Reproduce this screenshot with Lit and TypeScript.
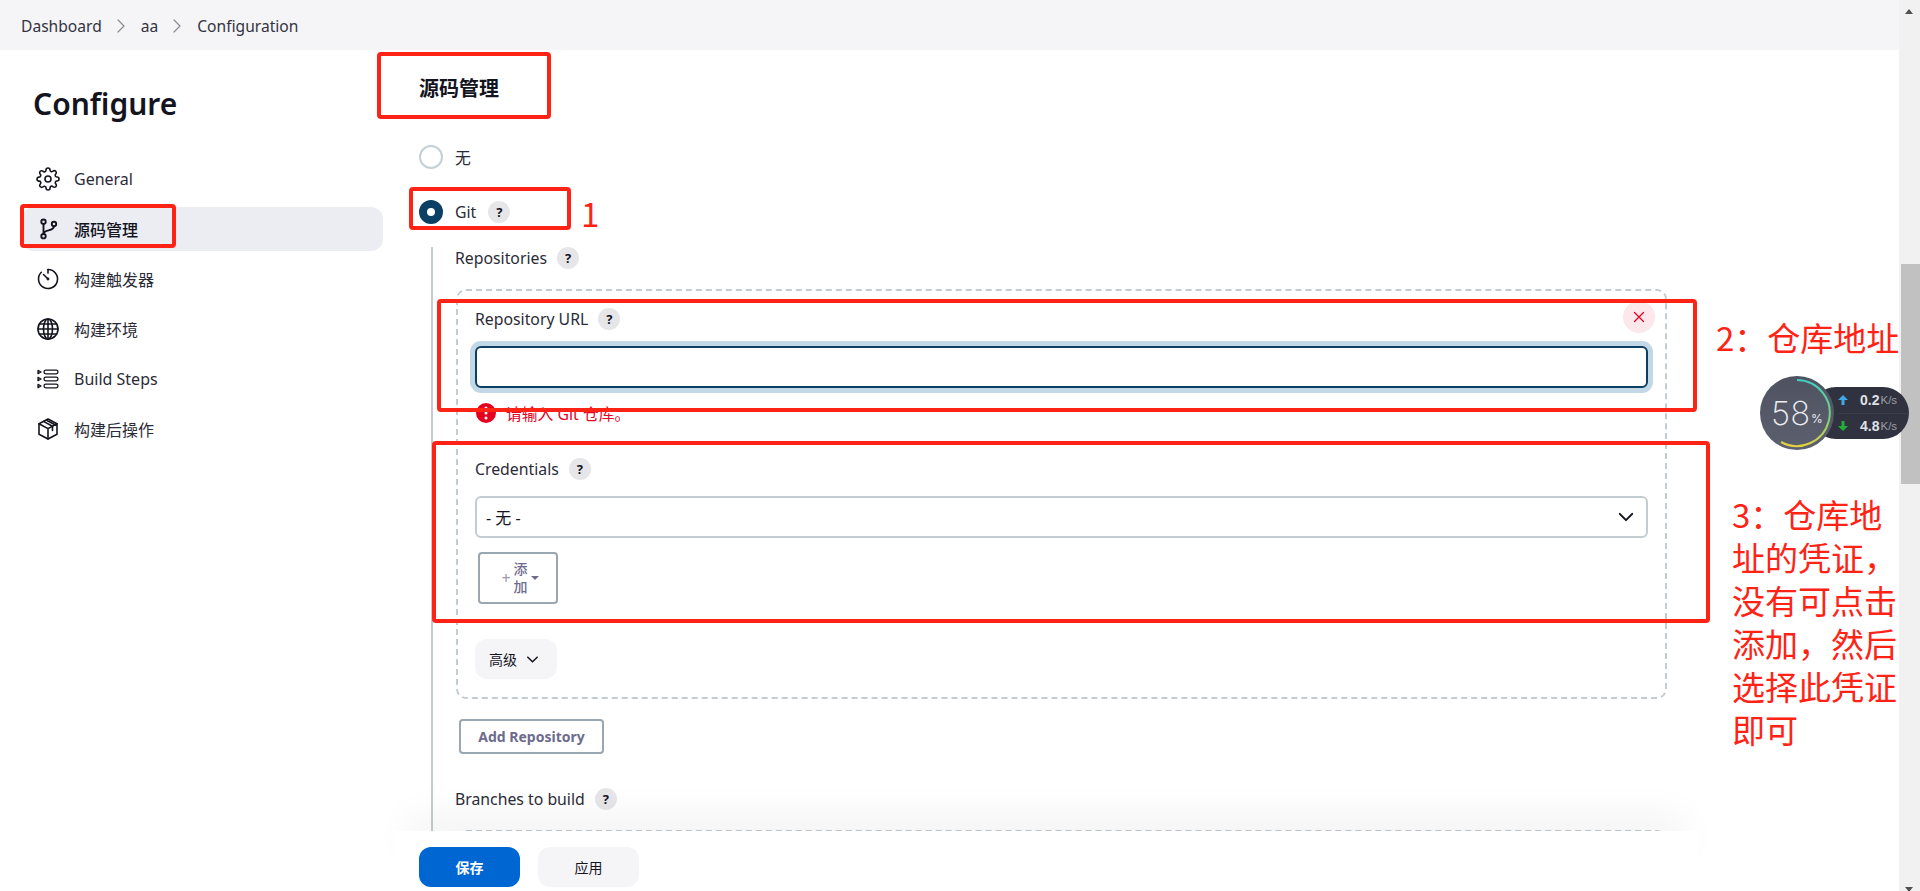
import { LitElement, html, css, svg } from "lit";
import { customElement } from "lit/decorators.js";

const icon = (body: unknown) => html`<svg class="ico" viewBox="0 0 24 24" fill="none" stroke="currentColor" stroke-width="1.6" stroke-linecap="round" stroke-linejoin="round">${body}</svg>`;

const gear = svg`<circle cx="12" cy="12" r="3"/><path d="M19.4 15a1.65 1.65 0 0 0 .33 1.82l.06.06a2 2 0 0 1 0 2.83 2 2 0 0 1-2.83 0l-.06-.06a1.65 1.65 0 0 0-1.82-.33 1.65 1.65 0 0 0-1 1.51V21a2 2 0 0 1-2 2 2 2 0 0 1-2-2v-.09A1.65 1.65 0 0 0 9 19.4a1.65 1.65 0 0 0-1.82.33l-.06.06a2 2 0 0 1-2.83 0 2 2 0 0 1 0-2.83l.06-.06a1.65 1.65 0 0 0 .33-1.82 1.65 1.65 0 0 0-1.51-1H3a2 2 0 0 1-2-2 2 2 0 0 1 2-2h.09A1.65 1.65 0 0 0 4.6 9a1.65 1.65 0 0 0-.33-1.82l-.06-.06a2 2 0 0 1 0-2.83 2 2 0 0 1 2.83 0l.06.06a1.65 1.65 0 0 0 1.82.33H9a1.65 1.65 0 0 0 1-1.51V3a2 2 0 0 1 2-2 2 2 0 0 1 2 2v.09a1.65 1.65 0 0 0 1 1.51 1.65 1.65 0 0 0 1.82-.33l.06-.06a2 2 0 0 1 2.83 0 2 2 0 0 1 0 2.83l-.06.06a1.65 1.65 0 0 0-.33 1.82V9a1.65 1.65 0 0 0 1.51 1H21a2 2 0 0 1 2 2 2 2 0 0 1-2 2h-.09a1.65 1.65 0 0 0-1.51 1z"/>`;
const branch = svg`<g stroke-width="1.9"><circle cx="7.500" cy="4.700" r="2.200"/><circle cx="7.500" cy="19.200" r="2.200"/><circle cx="18" cy="7" r="2.200"/><path d="M7.500 6.900v10.100M18 9.200c0 5.300-10.500 3-10.500 7.800"/></g>`;
const timer = svg`<path d="M12 2.500a9.500 9.500 0 1 1-6.700 2.800"/><path d="M12 2.500v3.600"/><path d="M7.500 7.500l4.500 4.500"/><circle cx="12" cy="12" r=".6"/>`;
const globe = svg`<circle cx="12" cy="12" r="10"/><ellipse cx="12" cy="12" rx="4.500" ry="10"/><path d="M12 2v20M2 12h20M3.400 7h17.200M3.400 17h17.200"/>`;
const steps = svg`<g stroke-width="1.3"><rect x="8" y="3.200" width="14" height="3.600" rx="1.800"/><rect x="8" y="10.200" width="14" height="3.600" rx="1.800"/><rect x="8" y="17.200" width="14" height="3.600" rx="1.800"/><path d="M2 3.400l3 1.600-3 1.600zM2 10.400l3 1.600-3 1.600zM2 17.400l3 1.600-3 1.600z"/></g>`;
const box = svg`<path d="M12 2l9 4.800v10.400L12 22l-9-4.800V6.800z"/><path d="M3 6.800l9 4.800 9-4.800M12 11.600V22"/><path d="M7.500 4.400l9 4.800v4.300M11 3.500l9 4.800"/>`;
const chevron = html`<svg class="chev" viewBox="0 0 16 16" fill="none" stroke="currentColor" stroke-width="1.6" stroke-linecap="round" stroke-linejoin="round"><path d="M3 5.500l5 5 5-5"/></svg>`;
const sep = html`<svg class="sep" viewBox="0 0 10 16" fill="none" stroke="#8a8a94" stroke-width="1.200" stroke-linecap="round" stroke-linejoin="round"><path d="M2 2l6 6-6 6"/></svg>`;
const help = html`<span class="help">?</span>`;

@customElement("app-root")
export class AppRoot extends LitElement {
  static styles = css`
    :host { display: block; height: 891px; width: 100%; font-family: "Noto Sans", "Noto Sans CJK SC", sans-serif; color: #14141f; font-size: 14px; }
    * { box-sizing: border-box; }
    .page { position: relative; width: 1920px; height: 891px; overflow: hidden; background: #fff; display: flex; }
    .scrollbar { position: relative; width: 21px; flex: none; background: #f1f1f1; padding: 264px 0 0 2px; }
    .thumb { height: 220px; background: #c1c1c1; }
    .arrow { position: absolute; left: 6px; width: 0; height: 0; border-left: 4.500px solid transparent; border-right: 4.500px solid transparent; }
    .arrow.up { top: 9px; border-bottom: 5px solid #505050; }
    .arrow.down { top: 887px; border-top: 5px solid #505050; }
    .view { flex: 1; min-width: 0; display: flex; flex-direction: column; }
    .topbar { height: 50px; flex: none; background: #f5f5f8; display: flex; align-items: center; padding: 1px 0 0 21px; font-size: 15.600px; color: #333340; }
    .sep { width: 10px; height: 16px; margin: 0 15px 0 14px; }
    .body { flex: 1; display: flex; min-height: 0; }
    .side { width: 419px; flex: none; padding: 32px 36px 0 22px; }
    .side h1 { margin: 0 0 0 11px; font-size: 30px; line-height: 44px; font-weight: 600; }
    .nav { margin-top: 31px; display: flex; flex-direction: column; gap: 6px; }
    .item { height: 44px; display: flex; align-items: center; border-radius: 12px; padding-left: 14px; gap: 14px; font-size: 16px; color: #2b2b38; }
    .item.on { background: #ecedf3; font-weight: 500; color: #14141f; }
    .ico { width: 24px; height: 24px; flex: none; color: #14141f; }
    .main { flex: 1; min-width: 0; overflow: hidden; }
    h2 { margin: 0; padding-top: 27px; font-size: 20px; line-height: 24px; font-weight: 700; }
    .radio { display: flex; align-items: center; height: 24px; gap: 12px; font-size: 15.800px; color: #2b2b38; }
    .radio.first { margin-top: 44px; }
    .radio.second { margin-top: 31px; }
    .dot { width: 24px; height: 24px; border-radius: 50%; flex: none; border: 2px solid #c5d0d6; background: #fff; }
    .dot.on { border: 8.500px solid #0b3f63; background: #fff; }
    .help { width: 22px; height: 22px; border-radius: 50%; background: #e6e6e9; display: inline-flex; align-items: center; justify-content: center; font-size: 13px; font-weight: 700; color: #14141f; }
    .nest { margin: 23px 0 0 12px; border-left: 2px solid #c3ccd1; padding-left: 22px; width: 1237px; }
    .label { display: flex; align-items: center; height: 22px; gap: 10px; font-size: 15.800px; color: #2b2b38; }
    .repo { position: relative; margin: 20px 0 0 1px; width: 1211px; height: 410px; border: 2px dashed #c3ccd1; border-radius: 10px; padding: 17px 17px 17px 17px; }
    .close { position: absolute; top: 10px; right: 10px; width: 32px; height: 32px; border-radius: 50%; background: #fce8ec; display: flex; align-items: center; justify-content: center; }
    .close svg { width: 12px; height: 12px; }
    .input { margin-top: 16px; height: 42px; border: 2px solid #0b3f63; border-radius: 6px; box-shadow: 0 0 0 5px #c2d8e7; background: #fff; }
    .err { margin-top: 15px; height: 20px; display: flex; align-items: center; gap: 10px; color: #e6001f; font-size: 15.800px; margin-left: 1px; }
    .erri { width: 20px; height: 20px; flex: none; }
    .creds { margin-top: 35px; }
    .select { margin-top: 16px; height: 42px; border: 2px solid #c3ccd1; border-radius: 6px; display: flex; align-items: center; justify-content: space-between; padding: 0 10px 0 9px; font-size: 16px; color: #14141f; }
    .chev { width: 20px; height: 20px; flex: none; }
    .add { margin: 14px 0 0 3px; width: 80px; height: 52px; border: 2px solid #9aa6b0; border-radius: 4px; display: flex; align-items: center; justify-content: center; gap: 3px; color: #6d6b8d; font-size: 14px; font-weight: 500; padding-left: 4px; }
    .add .w { display: flex; flex-direction: column; line-height: 18px; }
    .plus { font-size: 16px; font-weight: 400; color: #9a99b0; }
    .caret { width: 0; height: 0; border-left: 4px solid transparent; border-right: 4px solid transparent; border-top: 4px solid #6d6b8d; }
    .adv { margin-top: 35px; width: 82px; height: 40px; background: #f5f5f8; border-radius: 12px; display: flex; align-items: center; gap: 8px; padding-left: 14px; font-size: 14px; }
    .adv .chev { width: 15px; height: 15px; }
    .addrepo { margin: 20px 0 0 4px; width: 145px; height: 35px; border: 2px solid #9aa6b0; border-radius: 4px; display: flex; align-items: center; justify-content: center; font-size: 14px; font-weight: 700; color: #6d6b8d; }
    .branches { margin-top: 34px; }
    .repo2 { margin: 20px 0 0 1px; width: 1211px; height: 200px; border: 2px dashed #c3ccd1; border-radius: 10px; }
    .bar { position: absolute; left: 394px; top: 831px; width: 1304px; height: 60px; background: #fff; box-shadow: 0 -27px 40px -16px rgba(20,20,31,.07); display: flex; gap: 18px; padding: 16px 0 0 25px; }
    .btn { width: 101px; height: 40px; border-radius: 12px; display: flex; align-items: center; justify-content: center; font-size: 14px; }
    .save { background: #0066d2; color: #fff; font-weight: 700; }
    .apply { background: #f5f5f8; color: #14141f; }
    .mark { position: absolute; border: 4px solid #ff2316; border-radius: 4px; pointer-events: none; }
    .m1 { left: 377px; top: 52px; width: 174px; height: 67px; }
    .m2 { left: 20px; top: 204px; width: 156px; height: 44px; }
    .m3 { left: 409px; top: 187px; width: 162px; height: 43px; }
    .m4 { left: 437px; top: 299px; width: 1260px; height: 113px; }
    .m5 { left: 432px; top: 441px; width: 1278px; height: 182px; }
    .note { position: absolute; color: #ff2316; font-size: 33px; line-height: 43px; font-family: "Noto Sans CJK SC", sans-serif; white-space: nowrap; }
    .n1 { left: 581px; top: 192px; }
    .n2 { left: 1716px; top: 316px; }
    .n3 { left: 1732px; top: 493px; }
    .widget { position: absolute; left: 1760px; top: 376px; width: 150px; height: 74px; }
    .pill { position: absolute; left: 50px; top: 11px; width: 99px; height: 52px; border-radius: 26px; background: #30333f; }
    .ring { position: absolute; left: 0; top: 0; width: 74px; height: 74px; }
    .pct { position: absolute; left: 0; top: 0; width: 74px; height: 74px; display: flex; align-items: center; justify-content: center; color: #eceef2; font-size: 33px; font-weight: 200; font-family: "Inter", sans-serif; }
    .pct small { font-size: 12px; margin: 10px 0 0 1px; font-weight: 400; }
    .rate { position: absolute; left: 27px; height: 26px; width: 70px; display: flex; align-items: center; color: #dfe1e6; font-size: 14px; font-weight: 700; font-family: "Liberation Sans", sans-serif; }
    .rate svg { width: 12px; height: 12px; margin-right: 11px; flex: none; }
    .rate small { font-size: 11.500px; font-weight: 400; color: #9a9da8; margin-left: 1px; }
    .r1 { top: 0; } .r2 { top: 26px; }
    .rule { position: absolute; left: 28px; right: 0; top: 26px; height: 1px; background: #3b3e4a; }
  `;

  render() {
    return html`<div class="page">
      <div class="view">
        <div class="topbar"><span>Dashboard</span>${sep}<span>aa</span>${sep}<span>Configuration</span></div>
        <div class="body">
          <aside class="side">
            <h1>Configure</h1>
            <nav class="nav">
              <div class="item">${icon(gear)}General</div>
              <div class="item on">${icon(branch)}源码管理</div>
              <div class="item">${icon(timer)}构建触发器</div>
              <div class="item">${icon(globe)}构建环境</div>
              <div class="item">${icon(steps)}Build Steps</div>
              <div class="item">${icon(box)}构建后操作</div>
            </nav>
          </aside>
          <main class="main">
            <h2>源码管理</h2>
            <div class="radio first"><span class="dot"></span>无</div>
            <div class="radio second"><span class="dot on"></span>Git ${help}</div>
            <div class="nest">
              <div class="label">Repositories ${help}</div>
              <div class="repo">
                <div class="close"><svg viewBox="0 0 12 12" fill="none" stroke="#e6001f" stroke-width="1.300" stroke-linecap="round"><path d="M1.500 1.500l9 9M10.500 1.500l-9 9"/></svg></div>
                <div class="label">Repository URL ${help}</div>
                <div class="input"></div>
                <div class="err"><svg class="erri" viewBox="0 0 20 20"><circle cx="10" cy="10" r="10" fill="#e6001f"/><g fill="#fff"><circle cx="10" cy="5" r="1.500"/><circle cx="10" cy="10" r="1.500"/><circle cx="10" cy="15" r="1.500"/></g></svg>请输入 Git 仓库。</div>
                <div class="label creds">Credentials ${help}</div>
                <div class="select"><span>- 无 -</span>${chevron}</div>
                <div class="add"><span class="plus">+</span><span class="w"><span>添</span><span>加</span></span><span class="caret"></span></div>
                <div class="adv">高级 ${chevron}</div>
              </div>
              <div class="addrepo">Add Repository</div>
              <div class="label branches">Branches to build ${help}</div>
              <div class="repo2"></div>
            </div>
          </main>
        </div>
      </div>
      <div class="scrollbar"><span class="arrow up"></span><div class="thumb"></div><span class="arrow down"></span></div>

      <div class="bar"><div class="btn save">保存</div><div class="btn apply">应用</div></div>

      <div class="mark m1"></div><div class="mark m2"></div><div class="mark m3"></div><div class="mark m4"></div><div class="mark m5"></div>
      <div class="note n1">1</div>
      <div class="note n2">2：仓库地址</div>
      <div class="note n3">3：仓库地<br />址的凭证，<br />没有可点击<br />添加，然后<br />选择此凭证<br />即可</div>

      <div class="widget">
        <div class="pill">
          <div class="rule"></div>
          <div class="rate r1"><svg viewBox="0 0 12 12"><path d="M6 1l5 5H7.500v5h-3V6H1z" fill="#3fa9e8"/></svg>0.2<small>K/s</small></div>
          <div class="rate r2"><svg viewBox="0 0 12 12"><path d="M6 11L1 6h3.500V1h3v5H11z" fill="#1fae3a"/></svg>4.8<small>K/s</small></div>
        </div>
        <svg class="ring" viewBox="0 0 74 74">
          <defs>
            <linearGradient id="rg" x1="0" y1="0" x2="0" y2="1"><stop offset="0" stop-color="#3fd0c0"/><stop offset=".6" stop-color="#7fd07a"/><stop offset="1" stop-color="#e3d13f"/></linearGradient>
            <linearGradient id="bg" x1="0" y1="0" x2="0" y2="1"><stop offset="0" stop-color="#4f5361"/><stop offset="1" stop-color="#5b5f6e"/></linearGradient>
          </defs>
          <circle cx="37" cy="37" r="37" fill="url(#bg)"/>
          <path d="M37 4A33 33 0 1 1 21 66" fill="none" stroke="url(#rg)" stroke-width="2"/>
        </svg>
        <div class="pct">58<small>%</small></div>
      </div>
    </div>`;
  }
}
